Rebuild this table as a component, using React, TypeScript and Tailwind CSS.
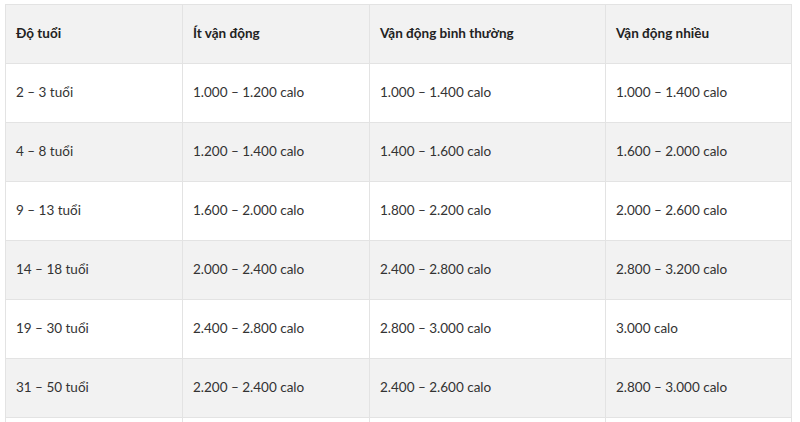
const headers = ["Độ tuổi", "Ít vận động", "Vận động bình thường", "Vận động nhiều"];

const rows = [
  ["2 – 3 tuổi", "1.000 – 1.200 calo", "1.000 – 1.400 calo", "1.000 – 1.400 calo"],
  ["4 – 8 tuổi", "1.200 – 1.400 calo", "1.400 – 1.600 calo", "1.600 – 2.000 calo"],
  ["9 – 13 tuổi", "1.600 – 2.000 calo", "1.800 – 2.200 calo", "2.000 – 2.600 calo"],
  ["14 – 18 tuổi", "2.000 – 2.400 calo", "2.400 – 2.800 calo", "2.800 – 3.200 calo"],
  ["19 – 30 tuổi", "2.400 – 2.800 calo", "2.800 – 3.000 calo", "3.000 calo"],
  ["31 – 50 tuổi", "2.200 – 2.400 calo", "2.400 – 2.600 calo", "2.800 – 3.000 calo"],
  // next row only peeks in at the bottom edge
  ["", "", "", ""],
];

const colWidths = ["w-[177px]", "w-[187px]", "w-[236px]", "w-[186px]"];

export default function App() {
  return (
    <div className="h-[422px] overflow-hidden bg-white pt-[4px] pl-[5px] font-['Lato',sans-serif]">
      <table className="w-[786px] table-fixed border-collapse text-[13.5px]">
        <thead>
          <tr className="h-[59px] bg-[#f2f2f2]">
            {headers.map((h, i) => (
              <th
                key={h}
                className={`${colWidths[i]} border border-[#e3e3e3] px-[10px] pb-[2px] text-left font-bold text-[#222]`}
              >
                {h}
              </th>
            ))}
          </tr>
        </thead>
        <tbody>
          {rows.map((r, ri) => (
            <tr key={ri} className={`h-[59px] ${ri % 2 === 1 ? "bg-[#f2f2f2]" : "bg-white"}`}>
              {r.map((c, ci) => (
                <td key={ci} className="border border-[#e3e3e3] px-[10px] pb-[2px] text-[#333]">
                  {c}
                </td>
              ))}
            </tr>
          ))}
        </tbody>
      </table>
    </div>
  );
}
